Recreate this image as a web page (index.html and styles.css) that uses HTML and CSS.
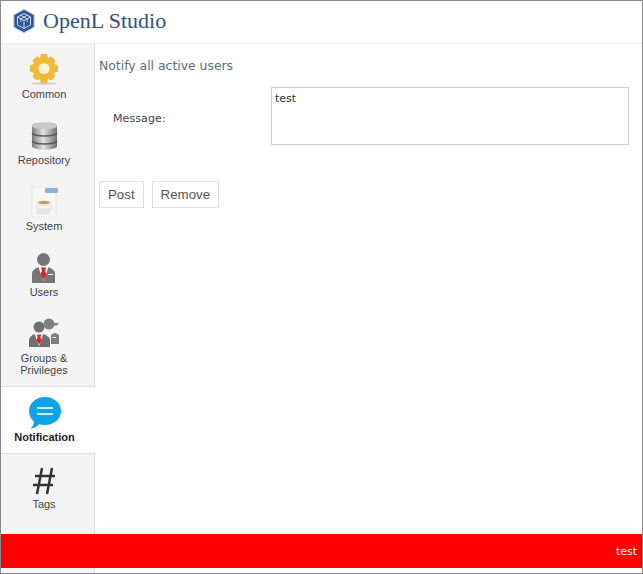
FILE: index.html
```html
<!DOCTYPE html>
<html lang="en">

<head>
    <meta charset="UTF-8">
    <title>OpenL Studio</title>
    <link rel="stylesheet" href="styles.css">
</head>

<body>
    <div id="container">
        <header class="top">
            <svg class="logo" viewBox="0 0 24 24" width="24" height="24">
                <path d="M12 .5 22 6v12l-10 5.5L2 18V6z" fill="#2f5597"/>
                <path d="M12 .5 22 6v12l-10 5.5L2 18V6z" fill="none" stroke="#9fb2d3" stroke-width="1"/>
                <path d="M12 4.500 18.500 8v8L12 19.500 5.500 16V8zM5.500 8 12 11.500 18.500 8M12 11.500v8M8.700 6.300l6.500 3.500v3M15.300 6.300 8.800 9.800v3" fill="none" stroke="#cfdaf0" stroke-width="1"/>
            </svg>
            <span class="brand">OpenL Studio</span>
        </header>

        <div class="main">
            <nav class="side">
                <a class="item">
                    <svg class="icon" viewBox="0 0 32 32">
                        <ellipse cx="16" cy="29.500" rx="13" ry="1.200" fill="#ccc"/>
                        <path d="M13 0h6l1 4 3.500-1.500 4 4L26 10l4 1.500v6L26 19l1.500 3.500-4 4L20 25l-1 4h-6l-1-4-3.500 1.500-4-4L6 19l-4-1.500v-6L6 10 4.500 6.500l4-4L12 4z" fill="#f0b93a"/>
                        <circle cx="16" cy="14.500" r="5.500" fill="#fdf3d0"/>
                    </svg>
                    <span>Common</span>
                </a>
                <a class="item">
                    <svg class="icon" viewBox="0 0 32 32">
                        <defs>
                            <linearGradient id="metal">
                                <stop offset="0" stop-color="#7d7d7d"/>
                                <stop offset=".45" stop-color="#e2e2e2"/>
                                <stop offset="1" stop-color="#6e6e6e"/>
                            </linearGradient>
                        </defs>
                        <path d="M4 6c0-5 25-5 25 0v20c0 5-25 5-25 0z" fill="url(#metal)"/>
                        <ellipse cx="16.500" cy="6" rx="12.500" ry="3.500" fill="#c9c9c9"/>
                        <path d="M4 13c3 4 22 4 25 0M4 21c3 4 22 4 25 0" fill="none" stroke="#5a5a5a" stroke-width="1.500"/>
                    </svg>
                    <span>Repository</span>
                </a>
                <a class="item">
                    <svg class="icon" viewBox="0 0 32 32">
                        <rect x="4" y="1" width="24" height="30" fill="#f7f7f7" stroke="#e6e6e6"/>
                        <rect x="17" y="2" width="13" height="5" rx="1" fill="#8db2d2"/>
                        <ellipse cx="16" cy="17" rx="8" ry="3" fill="#efe6cc"/>
                        <ellipse cx="16" cy="16.500" rx="6" ry="1.500" fill="#b09a6a"/>
                        <path d="M8 18c1 6 15 6 16 0 1 7-1 9-8 9s-9-2-8-9z" fill="#e6e6e6"/>
                        <ellipse cx="15" cy="27" rx="8" ry="1.500" fill="#e2e2e2"/>
                    </svg>
                    <span>System</span>
                </a>
                <a class="item">
                    <svg class="icon" viewBox="0 0 32 32">
                        <circle cx="15.500" cy="7.500" r="6.500" fill="#777"/>
                        <path d="M4 31v-9c0-4 4-6 7-7h9c3 1 7 3 7 7v9z" fill="#777"/>
                        <path d="M10.500 15h10l-2 6-3 8-3-8z" fill="#fff"/>
                        <path d="M13 15.500h5l-1 3 1.500 4-3 5.500-3-5.500 1.500-4z" fill="#d8232a"/>
                        <rect x="20" y="22" width="5" height="1" fill="#fff"/>
                    </svg>
                    <span>Users</span>
                </a>
                <a class="item">
                    <svg class="icon" viewBox="0 0 32 32">
                        <circle cx="21" cy="6" r="5.500" fill="#808080"/>
                        <path d="M26 5h5l-2 2.500h-3z" fill="#808080"/>
                        <circle cx="11" cy="9" r="5.500" fill="#707070"/>
                        <path d="M1 29v-7c0-3 4-6 7-6h6c3 0 8 3 8 6v7z" fill="#707070"/>
                        <path d="M7 16h8l-1 4-3 8-3-8z" fill="#fff"/>
                        <path d="M9 16.500h4l-.5 3 1 3-2.500 4-2.500-4 1-3z" fill="#d8232a"/>
                        <path d="M23 26V17l3-2h2l3 2v9z" fill="#808080"/>
                        <path d="M20 15l3 2" stroke="#fff"/>
                        <rect x="25" y="19" width="3" height="1" fill="#fff"/>
                    </svg>
                    <span>Groups &amp;<br>Privileges</span>
                </a>
                <a class="item active">
                    <svg class="icon" viewBox="0 0 32 32">
                        <path d="M16 0c9 0 16 6.300 16 14s-7 14-16 14c-2 0-4-.3-5.500-1C8 29 6 31 1.500 32 4 29.500 5 26.500 4.800 24.500 1.800 22 0 18 0 14 0 6.300 7 0 16 0z" fill="#0ea2e8"/>
                        <rect x="8" y="10" width="16" height="2" fill="#c5ecff"/>
                        <rect x="8" y="16" width="16" height="2" fill="#c5ecff"/>
                    </svg>
                    <span>Notification</span>
                </a>
                <a class="item">
                    <svg class="icon" viewBox="0 0 32 32">
                        <path d="M14 4 9 30M24 4l-5 26M7 12h20M5 21h20" fill="none" stroke="#333" stroke-width="2.500"/>
                    </svg>
                    <span>Tags</span>
                </a>
            </nav>

            <div class="content">
                <h3>Notify all active users</h3>
                <div class="field">
                    <label for="message">Message:</label>
                    <textarea id="message">test</textarea>
                </div>
                <div class="buttons">
                    <button>Post</button>
                    <button>Remove</button>
                </div>
            </div>
        </div>

        <div class="banner">test</div>
    </div>
</body>

</html>
```
FILE: styles.css
```css
html, body {
    margin: 0;
    height: 100%;
    overflow: hidden;
}

body {
    font-family: "Liberation Sans", Arial, sans-serif;
    background: #fff;
}

#container {
    position: relative;
    display: flex;
    flex-direction: column;
    box-sizing: border-box;
    height: 574px;
    border: 1px solid #8a8a8a;
}

.top {
    display: flex;
    align-items: center;
    gap: 7px;
    box-sizing: border-box;
    height: 43px;
    padding: 0 0 2px 11px;
    border-bottom: 1px solid #eee;
}

.brand {
    font-family: "Liberation Serif", "Times New Roman", serif;
    font-size: 22px;
    color: #34507f;
}

.main {
    display: flex;
    flex: 1;
    min-height: 0;
}

.side {
    box-sizing: border-box;
    width: 94px;
    background: #f4f4f4;
    border-right: 1px solid #ddd;
}

.item {
    display: flex;
    flex-direction: column;
    align-items: center;
    box-sizing: border-box;
    height: 66px;
    padding: 10px 7px 0 0;
    font-size: 11px;
    line-height: 12px;
    text-align: center;
    color: #444;
}

.item:nth-child(5) {
    height: 79px;
    border-bottom: 1px solid #ddd;
}

.item.active {
    height: 67px;
    margin-right: -1px;
    background: #fff;
    color: #222;
    font-weight: bold;
    border-bottom: 1px solid #ddd;
}

.icon {
    width: 32px;
    height: 32px;
    margin-bottom: 2px;
}

.content {
    flex: 1;
    padding: 14px 13px 0 4px;
    font-family: "DejaVu Sans", Verdana, sans-serif;
}

h3 {
    margin: 0;
    font-size: 12.400px;
    line-height: 16px;
    font-weight: normal;
    color: #5d6f78;
}

.field {
    display: flex;
    margin-top: 13px;
}

.field label {
    width: 172px;
    padding: 25px 0 0 14px;
    box-sizing: border-box;
    font-size: 11px;
    letter-spacing: .1px;
    color: #444;
}

textarea {
    flex: 1;
    box-sizing: border-box;
    height: 58px;
    padding: 4px 3px;
    border: 1px solid #ccc;
    font-family: "DejaVu Sans", Verdana, sans-serif;
    font-size: 11px;
    color: #333;
    resize: none;
    outline: none;
}

.buttons {
    display: flex;
    gap: 8px;
    margin-top: 36px;
}

button {
    box-sizing: border-box;
    height: 27px;
    padding: 0 8px;
    background: #fff;
    border: 1px solid #e2e2e2;
    font-family: "Liberation Sans", Arial, sans-serif;
    font-size: 13.300px;
    color: #555;
}

.banner {
    position: absolute;
    left: 0;
    right: 0;
    bottom: 5px;
    height: 34px;
    padding-right: 5px;
    background: #fe0000;
    font-family: "DejaVu Sans", Verdana, sans-serif;
    font-size: 11px;
    line-height: 36px;
    text-align: right;
    color: #fff;
}
```
